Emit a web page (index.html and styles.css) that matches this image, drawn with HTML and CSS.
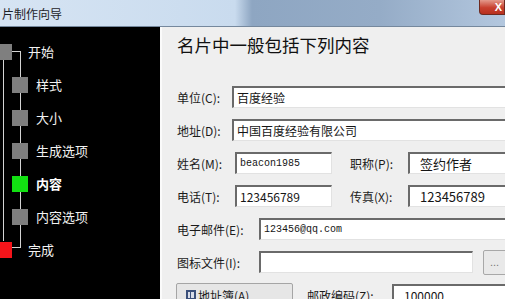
FILE: index.html
```html
<!DOCTYPE html>
<html lang="zh-CN">
<head>
    <meta charset="UTF-8">
    <title>名片制作向导</title>
    <link rel="stylesheet" href="styles.css">
</head>
<body>
    <div class="window">
        <div class="titlebar">
            <span class="title">片制作向导</span>
            <div class="close">X</div>
        </div>
        <div class="main">
            <div class="side">
                <svg class="lines" width="160" height="271">
                    <line x1="3.5" y1="32" x2="3.5" y2="214" />
                    <line x1="20.5" y1="24" x2="20.5" y2="221" />
                    <line x1="12" y1="24.5" x2="21" y2="24.5" />
                    <line x1="12" y1="220.5" x2="21" y2="220.5" />
                </svg>
                <div class="step end"><span class="box grey"></span><span class="name">开始</span></div>
                <div class="step"><span class="box grey"></span><span class="name">样式</span></div>
                <div class="step"><span class="box grey"></span><span class="name">大小</span></div>
                <div class="step"><span class="box grey"></span><span class="name">生成选项</span></div>
                <div class="step"><span class="box green"></span><span class="name current">内容</span></div>
                <div class="step"><span class="box grey"></span><span class="name">内容选项</span></div>
                <div class="step end"><span class="box red"></span><span class="name">完成</span></div>
            </div>
            <div class="content">
                <h1 class="heading">名片中一般包括下列内容</h1>
                <div class="rows">
                    <div class="row">
                        <span class="label w55">单位(C):</span>
                        <div class="field wide">百度经验</div>
                    </div>
                    <div class="row">
                        <span class="label w55">地址(D):</span>
                        <div class="field wide">中国百度经验有限公司</div>
                    </div>
                    <div class="row">
                        <span class="label w58">姓名(M):</span>
                        <div class="field short mono">beacon1985</div>
                        <span class="label second">职称(P):</span>
                        <div class="field right big">签约作者</div>
                    </div>
                    <div class="row">
                        <span class="label w58">电话(T):</span>
                        <div class="field short">123456789</div>
                        <span class="label second">传真(X):</span>
                        <div class="field right big">123456789</div>
                    </div>
                    <div class="row">
                        <span class="label w82">电子邮件(E):</span>
                        <div class="field wide mono">123456@qq.com</div>
                    </div>
                    <div class="row">
                        <span class="label w82">图标文件(I):</span>
                        <div class="field icon"></div>
                        <div class="dots">...</div>
                    </div>
                    <div class="row">
                        <div class="book-btn">
                            <svg width="12" height="12" viewBox="0 0 12 12">
                                <rect x="1" y="1" width="10" height="10" fill="#3a4f7a" />
                                <rect x="3" y="3" width="6" height="6" fill="#d8dde8" />
                                <rect x="5" y="3" width="1" height="6" fill="#3a4f7a" />
                            </svg>
                            <span>地址簿(A)...</span>
                        </div>
                        <span class="label zip">邮政编码(Z):</span>
                        <div class="field zipfield">100000</div>
                    </div>
                </div>
            </div>
        </div>
    </div>
</body>
</html>
```

FILE: styles.css
```css
body {
    margin: 0;
    width: 505px;
    height: 299px;
    overflow: hidden;
    font-family: "Noto Sans CJK SC", "Liberation Sans", sans-serif;
}
.window {
    display: flex;
    flex-direction: column;
    height: 299px;
}
.titlebar {
    height: 27px;
    flex: none;
    display: flex;
    align-items: flex-start;
    background: linear-gradient(to right, #d6e4f3 0, #c9dbee 235px, #8ea6c2 252px, #95acc7 380px, #b3c7de 505px);
    border-bottom: 1px solid #75889d;
    box-sizing: border-box;
}
.title {
    font-size: 12px;
    line-height: 27px;
    color: #1e2228;
    margin-left: 2px;
}
.close {
    margin-left: auto;
    width: 26px;
    height: 15px;
    background: linear-gradient(#e49a8c, #c8402f 55%, #b8311f);
    border: 1px solid #6e2a20;
    border-top: none;
    border-radius: 0 0 0 4px;
    color: #fff;
    font-family: "Liberation Sans", sans-serif;
    font-weight: bold;
    font-size: 11px;
    line-height: 15px;
    text-align: right;
    padding-right: 2px;
    box-sizing: border-box;
}
.main {
    display: flex;
    flex: 1;
}
.side {
    width: 160px;
    flex: none;
    background: #000;
    position: relative;
    padding-top: 8px;
    box-sizing: border-box;
}
.lines {
    position: absolute;
    left: 0;
    top: 0;
}
.lines line {
    stroke: #d4d4d4;
    stroke-width: 1;
}
.step {
    position: relative;
    display: flex;
    align-items: center;
    height: 33px;
}
.box {
    width: 16px;
    height: 16px;
    margin-left: 12px;
}
.end .box {
    margin-left: -4px;
}
.grey {
    background: #7f7f7f;
}
.green {
    background: #12e012;
}
.red {
    background: #f5141a;
}
.name {
    color: #f2f2f2;
    font-size: 13px;
    margin-left: 8px;
}
.end .name {
    margin-left: 16px;
}
.name.current {
    font-weight: bold;
    color: #fff;
}
.content {
    flex: 1;
    background: #efefef;
    border-left: 2px solid #fbfbfb;
    padding-left: 15px;
    overflow: hidden;
}
.heading {
    margin: 6px 0 0;
    font-size: 17.5px;
    font-weight: normal;
    line-height: 24px;
    color: #111;
    white-space: nowrap;
}
.rows {
    margin-top: 29px;
    display: flex;
    flex-direction: column;
    gap: 11px;
}
.row {
    display: flex;
    align-items: center;
    height: 22px;
    white-space: nowrap;
}
.label {
    font-size: 12px;
    color: #1b1b1b;
    flex: none;
}
.w55 {
    width: 55px;
}
.w58 {
    width: 58px;
}
.w82 {
    width: 82px;
}
.second {
    margin-left: 18px;
    width: 58px;
}
.field {
    height: 22px;
    flex: none;
    box-sizing: border-box;
    background: #fff;
    border-top: 2px solid #6a6a6a;
    border-left: 2px solid #6a6a6a;
    border-right: 1px solid #e2e2e2;
    border-bottom: 1px solid #e2e2e2;
    font-size: 12px;
    line-height: 19px;
    color: #151515;
    padding-left: 3px;
    overflow: hidden;
}
.wide {
    width: 300px;
}
.short {
    width: 97px;
}
.right {
    width: 120px;
    padding-left: 10px;
}
.big {
    font-size: 13px;
}
.mono {
    font-family: "Liberation Mono", monospace;
    font-size: 10px;
}
.icon {
    width: 214px;
}
.dots {
    flex: none;
    margin-left: 10px;
    width: 30px;
    height: 25px;
    box-sizing: border-box;
    background: #e9e9e9;
    border: 1px solid #a8a8a8;
    border-radius: 2px;
    color: #777;
    font-family: "Liberation Sans", sans-serif;
    font-size: 11px;
    line-height: 22px;
    padding-left: 6px;
}
.book-btn {
    flex: none;
    margin-left: -1px;
    width: 117px;
    height: 24px;
    box-sizing: border-box;
    background: #e6e6e6;
    border: 1px solid #a5a5a5;
    border-radius: 2px;
    display: flex;
    align-items: center;
    padding-left: 8px;
    gap: 1px;
    font-size: 12px;
    color: #1b1b1b;
}
.zip {
    margin-left: 14px;
    width: 85px;
}
.zipfield {
    width: 130px;
    padding-left: 10px;
}
```
